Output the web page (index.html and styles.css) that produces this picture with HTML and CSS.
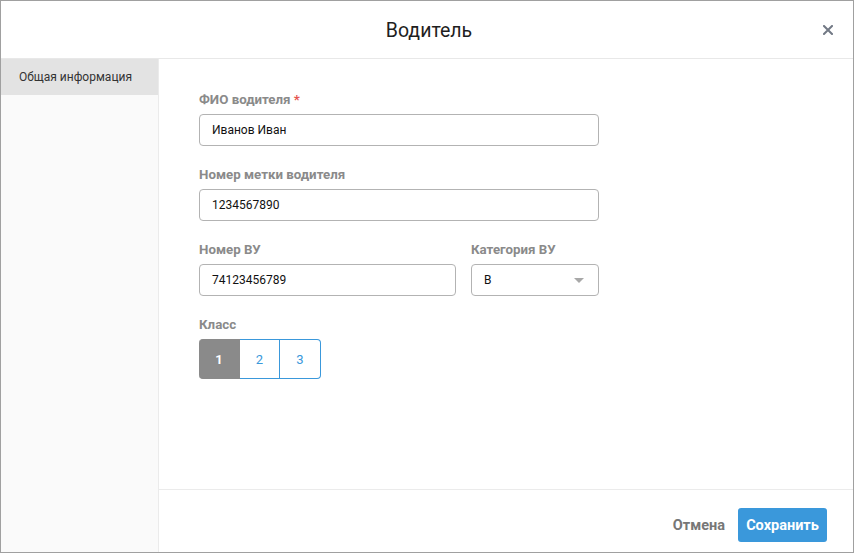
FILE: index.html
```html
<!DOCTYPE html>
<html lang="ru">
<head>
<meta charset="utf-8">
<title>Водитель</title>
<link rel="stylesheet" href="styles.css">
</head>
<body>
<div class="dialog">
  <header class="dlg-head">
    <h1 class="dlg-title">Водитель</h1>
    <button class="close" aria-label="Закрыть">
      <svg width="10" height="10" viewBox="0 0 10 10"><path d="M1 1L9 9M9 1L1 9" stroke="#727985" stroke-width="2" stroke-linecap="square"/></svg>
    </button>
  </header>
  <div class="dlg-body">
    <nav class="side">
      <div class="side-item active">Общая информация</div>
    </nav>
    <main class="main">
      <div class="form">
        <div class="field">
          <label class="lbl">ФИО водителя <span class="req">*</span></label>
          <div class="input w-full">Иванов Иван</div>
        </div>
        <div class="field">
          <label class="lbl">Номер метки водителя</label>
          <div class="input w-full">1234567890</div>
        </div>
        <div class="row">
          <div class="field">
            <label class="lbl">Номер ВУ</label>
            <div class="input w-num">74123456789</div>
          </div>
          <div class="field">
            <label class="lbl">Категория ВУ</label>
            <div class="input select w-cat"><span>B</span><span class="caret"></span></div>
          </div>
        </div>
        <div class="field">
          <label class="lbl">Класс</label>
          <div class="seg">
            <button class="seg-btn on">1</button>
            <button class="seg-btn">2</button>
            <button class="seg-btn">3</button>
          </div>
        </div>
      </div>
      <footer class="foot">
        <button class="btn-cancel">Отмена</button>
        <button class="btn-save">Сохранить</button>
      </footer>
    </main>
  </div>
</div>
</body>
</html>
```
FILE: styles.css
```css
* { box-sizing: border-box; }
html, body { margin: 0; padding: 0; }
body {
  font-family: Roboto, "Noto Sans", "Liberation Sans", sans-serif;
  background: #fff;
}
.dialog {
  width: 854px;
  height: 553px;
  border: 1px solid #a0a0a0;
  display: flex;
  flex-direction: column;
  background: #fff;
}
.dlg-head {
  height: 58px;
  flex: none;
  border-bottom: 1px solid #e8e8e8;
  display: flex;
  align-items: center;
  justify-content: center;
  position: relative;
}
.dlg-title {
  margin: 2px 0 0 4px;
  font-size: 19.5px;
  font-weight: 400;
  color: #1e1e1e;
}
.close {
  position: absolute;
  right: 19px;
  top: 23px;
  width: 12px;
  height: 12px;
  padding: 1px;
  border: 0;
  background: none;
  display: flex;
}
.dlg-body {
  flex: 1;
  display: flex;
  min-height: 0;
}
.side {
  width: 158px;
  flex: none;
  background: #fafafa;
  border-right: 1px solid #ebebeb;
}
.side-item {
  height: 36px;
  padding-left: 18px;
  display: flex;
  align-items: center;
  font-size: 12px;
  color: #333;
}
.side-item.active { background: #e3e3e3; }
.main {
  flex: 1;
  display: flex;
  flex-direction: column;
}
.form {
  flex: 1;
  padding: 33px 0 0 40px;
}
.field { margin-bottom: 21px; }
.lbl {
  display: block;
  height: 16px;
  line-height: 16px;
  font-size: 13.3px;
  font-weight: 700;
  color: #8a8a8a;
  margin-bottom: 6px;
}
.req { color: #e5544f; }
.input {
  height: 32px;
  border: 1px solid #b3b3b3;
  border-radius: 4px;
  padding: 0 12px;
  display: flex;
  align-items: center;
  font-size: 12px;
  color: #111;
}
.w-full { width: 400px; }
.w-num { width: 257px; }
.w-cat { width: 128px; }
.row { display: flex; gap: 15px; }
.select { justify-content: space-between; padding-right: 14px; }
.caret {
  width: 0;
  height: 0;
  border-left: 5px solid transparent;
  border-right: 5px solid transparent;
  border-top: 5px solid #a8a8a8;
}
.seg { display: flex; }
.seg-btn {
  width: 40px;
  height: 40px;
  border: 1px solid #3a98db;
  border-left: 0;
  background: #fff;
  color: #3a98db;
  font-family: inherit;
  font-size: 13px;
  padding: 0;
}
.seg-btn:last-child { border-radius: 0 4px 4px 0; width: 41px; }
.seg-btn.on {
  background: #8a8a8a;
  border-color: #8a8a8a;
  color: #fff;
  font-weight: 700;
  border-radius: 4px 0 0 4px;
  width: 41px;
}
.foot {
  flex: none;
  border-top: 1px solid #ebebeb;
  padding: 18px 26px 10px 0;
  display: flex;
  justify-content: flex-end;
  align-items: center;
  gap: 13px;
}
.btn-cancel {
  border: 0;
  background: none;
  padding: 0;
  font-family: inherit;
  font-size: 14.5px;
  font-weight: 700;
  color: #777;
}
.btn-save {
  width: 89px;
  height: 34px;
  border: 0;
  border-radius: 3px;
  background: #3a98db;
  color: #fff;
  font-family: inherit;
  font-size: 14.5px;
  font-weight: 700;
  padding: 0;
}
```
